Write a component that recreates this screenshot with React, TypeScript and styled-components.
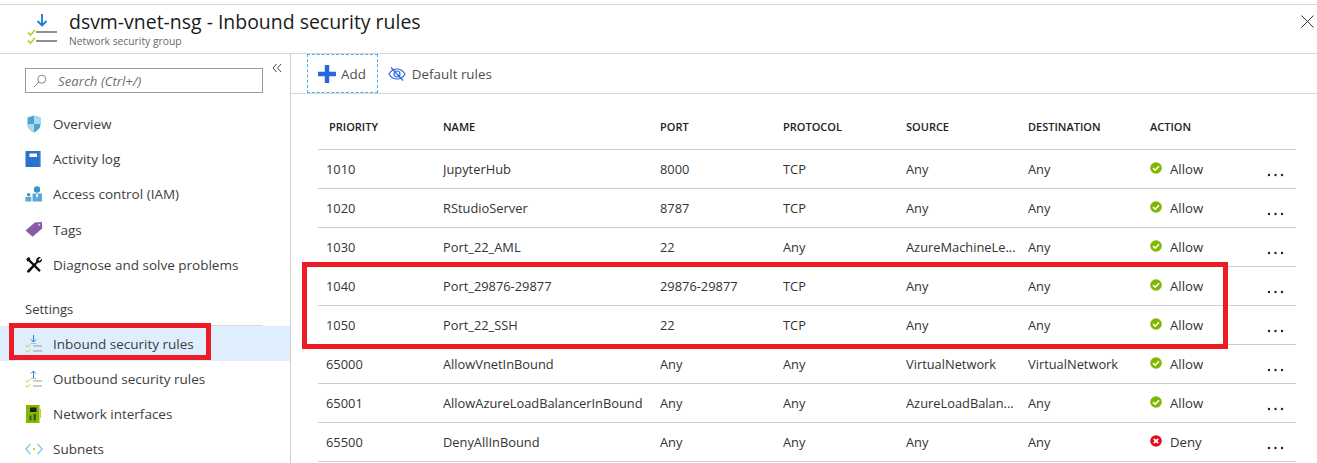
import React from "react";
import styled, { createGlobalStyle } from "styled-components";

const Global = createGlobalStyle`
  html, body { margin: 0; padding: 0; background: #fff; }
  body { font-family: "Open Sans", "Noto Sans", sans-serif; color: #333; overflow: hidden; }
  #root { width: 1317px; height: 463px; overflow: hidden; }
`;

const Page = styled.div`
  position: relative;
  width: 1317px;
  height: 463px;
  overflow: hidden;
  padding-top: 4px;
  box-sizing: border-box;
  display: flex;
  flex-direction: column;
  background: #fff;
`;

const Header = styled.header`
  flex: none;
  border-top: 1px solid #d6d6d6;
  border-bottom: 1px solid #d6d6d6;
  display: flex;
  align-items: flex-start;
  box-sizing: content-box;
  height: 48px;
  padding-left: 26px;
`;

const HeaderIcon = styled.svg`
  width: 34px;
  height: 34px;
  margin-top: 8px;
  flex: none;
`;

const Titles = styled.div`
  margin-left: 9px;
  display: flex;
  flex-direction: column;
`;

const Title = styled.h1`
  margin: 5px 0 0;
  font-size: 19.45px;
  line-height: 24px;
  font-weight: 400;
  color: #1b1b1b;
`;

const Subtitle = styled.div`
  font-size: 10.3px;
  line-height: 14px;
  color: #6b6b6b;
`;

const CloseBtn = styled.svg`
  width: 13px;
  height: 13px;
  margin-left: auto;
  margin-right: 3px;
  margin-top: 10px;
  flex: none;
`;

const Body = styled.div`
  flex: 1;
  display: flex;
  min-height: 0;
`;

const Side = styled.aside`
  width: 290px;
  flex: none;
  border-right: 1px solid #cfcfcf;
`;

const SearchRow = styled.div`
  display: flex;
  align-items: flex-start;
  padding: 14px 0 0 25px;
  height: 38px;
`;

const SearchBox = styled.div`
  width: 229px;
  height: 23px;
  border: 1px solid #9c9c9c;
  display: flex;
  align-items: center;
  padding-left: 7px;
  box-sizing: content-box;
`;

const SearchText = styled.span`
  font-size: 13.2px;
  font-style: italic;
  color: #6f6f6f;
  margin-left: 11px;
`;

const Collapse = styled.svg`
  width: 10px;
  height: 10px;
  margin: -5px 0 0 9px;
`;

const Nav = styled.nav`
  display: flex;
  flex-direction: column;
`;

const NavItem = styled.div<{ $active?: boolean; $nudge?: boolean }>`
  height: 35px;
  display: flex;
  align-items: center;
  padding-left: 25px;
  font-size: 13.5px;
  color: #3d3d3d;
  background: ${(p) => (p.$active ? "#deeefc" : "transparent")};
  margin-top: ${(p) => (p.$nudge ? "1px" : "0")};
`;

const NavIcon = styled.svg`
  width: 18px;
  height: 18px;
  flex: none;
  margin-right: 10px;
`;

const SectionLabel = styled.div`
  margin: 10px 0 0 25px;
  width: 238px;
  height: 34px;
  box-sizing: border-box;
  padding-top: 9px;
  font-size: 13px;
  line-height: 17px;
  color: #3a3a3a;
  border-bottom: 1px solid #d9d9d9;
`;

const Main = styled.main`
  flex: 1;
  min-width: 0;
  display: flex;
  flex-direction: column;
`;

const Toolbar = styled.div`
  height: 39px;
  flex: none;
  border-bottom: 1px solid #d6d6d6;
  display: flex;
  align-items: center;
  padding-left: 16px;
`;

const ToolBtn = styled.div<{ $focused?: boolean }>`
  display: flex;
  align-items: center;
  height: 39px;
  box-sizing: border-box;
  font-size: 13.4px;
  color: #4f4f4f;
  padding: ${(p) => (p.$focused ? "0 11px 0 10px" : "0 10px")};
  ${(p) => (p.$focused ? "border: 1px dashed #3fb4ea;" : "")}
`;

const ToolIcon = styled.svg<{ $gap: number }>`
  width: 18px;
  height: 18px;
  margin-right: ${(p) => p.$gap}px;
  flex: none;
`;

const Table = styled.div`
  margin-left: 27px;
  width: 978px;
  padding-top: 14px;
`;

const GRID = "117px 217px 123px 123px 122px 122px 1fr";

const HeadRow = styled.div`
  display: grid;
  grid-template-columns: ${GRID};
  height: 37px;
  padding-bottom: 4px;
  align-items: center;
  padding-left: 8px;
  border-bottom: 1px solid #cdcdcd;
  box-sizing: content-box;
  font-size: 11px;
  font-weight: 600;
  color: #222;
`;

const HeadCell = styled.div<{ $indent?: boolean }>`
  padding-left: ${(p) => (p.$indent ? "3px" : "0")};
`;

const Row = styled.div`
  display: grid;
  grid-template-columns: ${GRID};
  height: 38px;
  align-items: center;
  padding-left: 8px;
  border-bottom: 1px solid #cdcdcd;
  box-sizing: content-box;
  font-size: 12.85px;
  color: #333;
`;

const Cell = styled.div`
  white-space: nowrap;
  overflow: hidden;
  text-overflow: ellipsis;
`;

const ActionCell = styled.div`
  display: flex;
  align-items: center;
  position: relative;
  font-size: 13.2px;
`;

const StatusIcon = styled.svg`
  width: 12px;
  height: 12px;
  margin: -2px 8px 0 0;
  flex: none;
`;

const More = styled.svg`
  width: 17px;
  height: 4px;
  position: absolute;
  left: 117px;
  top: 13px;
`;

const Highlight = styled.div<{ $x: number; $y: number; $w: number; $h: number }>`
  position: absolute;
  left: ${(p) => p.$x}px;
  top: ${(p) => p.$y}px;
  width: ${(p) => p.$w}px;
  height: ${(p) => p.$h}px;
  box-sizing: border-box;
  border: 5px solid #ed1c24;
  pointer-events: none;
`;

const Overview = () => (
  <NavIcon viewBox="0 0 18 18">
    <path d="M9 .5 15.500 2.500V9.500C15.500 13.500 12 16 9 17.500 6 16 2.500 13.500 2.500 9.500V2.500Z" fill="#4aa5d3" />
    <path d="M9 .5V9H15.500V2.500Z" fill="#a9daec" />
    <path d="M9 9H2.500C2.600 13.400 6 16 9 17.500Z" fill="#a9daec" />
  </NavIcon>
);
const Log = () => (
  <NavIcon viewBox="0 0 18 18">
    <rect x="0.500" y="1" width="15.500" height="16" fill="#2a72cf" />
    <rect x="14.800" y="1" width="1.200" height="16" fill="#7fb0e6" />
    <rect x="4.500" y="3.500" width="7.500" height="3.500" fill="#fff" />
  </NavIcon>
);
const Iam = () => (
  <NavIcon viewBox="0 0 18 18">
    <circle cx="12" cy="4.500" r="3.200" fill="#3f94c6" />
    <path d="M7.500 8.500h9.500v8H7.500z" fill="#59a9d6" />
    <path d="M12 8.500l-1.200 2 1.200 2.500 1.200-2.500z" fill="#fff" />
    <circle cx="3.600" cy="9.800" r="1.800" fill="#3f94c6" />
    <path d="M0.300 12h6v4.500h-6z" fill="#59a9d6" />
  </NavIcon>
);
const Tag = () => (
  <NavIcon viewBox="0 0 18 18">
    <path d="M0.500 9.500 9.800 1.600 17 1 17.200 7.500 7.500 15.800Z" fill="#8a5aa8" />
    <circle cx="14.300" cy="3.800" r="1" fill="#e4d6ee" />
  </NavIcon>
);
const Tools = () => (
  <NavIcon viewBox="0 0 18 18">
    <path d="M1.200 3.200 3.400 1 5.400 2.400 5 3.600 15.800 14.300 14.200 16 3.400 5.200 2.400 5.600Z" fill="#111" />
    <path d="M15.800 1.200 13.200 3.800 14.400 5 17 2.600C17.400 5 15.600 7.200 13 6.800L4.400 16.300C3.400 17.400 1.300 15.600 2.300 14.400L11.200 5.400C10.700 2.800 13.200 .4 15.800 1.200Z" fill="#111" />
  </NavIcon>
);
const Rules = ({ up }: { up?: boolean }) => (
  <NavIcon viewBox="0 0 18 18">
    <path
      d={up ? "M8.500 8V1M6 3.500 8.500 1 11 3.500" : "M8.500 0V7M6 4.500 8.500 7 11 4.500"}
      fill="none"
      stroke="#2a7fdc"
      strokeWidth="1"
    />
    <path d="M6 8.500h5" stroke="#b9b9b9" strokeWidth="1" />
    <path d="M8 11h9M8 16h9" stroke="#9c9c9c" strokeWidth="1.100" />
    <path d="M0.500 10.500l2 1.700 2.800-3" fill="none" stroke="#b4d334" strokeWidth="1" />
    <path d="M0.500 15.500l2 1.700 2.800-3" fill="none" stroke="#b4d334" strokeWidth="1" />
  </NavIcon>
);
const Nic = () => (
  <NavIcon viewBox="0 0 18 18">
    <rect x="1" y="0" width="13.500" height="18" fill="#7fba00" />
    <rect x="14.500" y="4" width="1.500" height="9" fill="#d9c62e" />
    <rect x="5" y="2.500" width="6.500" height="4.500" fill="#1d1d1d" />
    <rect x="4.500" y="10.500" width="2" height="5" fill="#3d5a1e" />
    <rect x="8.500" y="9" width="2.500" height="6.500" fill="#3d5a1e" />
  </NavIcon>
);
const Subnet = () => (
  <NavIcon viewBox="0 0 18 18">
    <path d="M5.500 4 .8 9l4.700 5" fill="none" stroke="#7cbde6" strokeWidth="1.100" />
    <path d="M12.500 4 17.200 9l-4.700 5" fill="none" stroke="#7cbde6" strokeWidth="1.100" />
    <circle cx="9" cy="9" r="1.100" fill="#a6cc3c" />
  </NavIcon>
);

const Allow = () => (
  <StatusIcon viewBox="0 0 12 12">
    <circle cx="6" cy="6" r="5.800" fill="#7fb800" />
    <path d="M3 6.200 5.200 8.200 9 4.200" fill="none" stroke="#fff" strokeWidth="1.600" />
  </StatusIcon>
);
const Deny = () => (
  <StatusIcon viewBox="0 0 12 12">
    <circle cx="6" cy="6" r="5.800" fill="#e00b1c" />
    <path d="M3.800 3.800 8.200 8.200M8.200 3.800 3.800 8.200" fill="none" stroke="#fff" strokeWidth="1.700" />
  </StatusIcon>
);

const rows = [
  ["1010", "JupyterHub", "8000", "TCP", "Any", "Any", "Allow"],
  ["1020", "RStudioServer", "8787", "TCP", "Any", "Any", "Allow"],
  ["1030", "Port_22_AML", "22", "Any", "AzureMachineLe...", "Any", "Allow"],
  ["1040", "Port_29876-29877", "29876-29877", "TCP", "Any", "Any", "Allow"],
  ["1050", "Port_22_SSH", "22", "TCP", "Any", "Any", "Allow"],
  ["65000", "AllowVnetInBound", "Any", "Any", "VirtualNetwork", "VirtualNetwork", "Allow"],
  ["65001", "AllowAzureLoadBalancerInBound", "Any", "Any", "AzureLoadBalan...", "Any", "Allow"],
  ["65500", "DenyAllInBound", "Any", "Any", "Any", "Any", "Deny"],
];

const heads = ["PRIORITY", "NAME", "PORT", "PROTOCOL", "SOURCE", "DESTINATION", "ACTION"];

export default function App() {
  return (
    <Page>
      <Global />
      <Header>
        <HeaderIcon viewBox="0 0 34 34">
          <path d="M16 1V12.500M11.500 8 16 12.500 20.500 8" fill="none" stroke="#1e78d6" strokeWidth="1.800" />
          <path d="M10 19h21M10 28h21" stroke="#8f8f8f" strokeWidth="2.200" />
          <path d="M2 19.500l2.500 2.500 4.500-5" fill="none" stroke="#b4d334" strokeWidth="1.800" />
          <path d="M2 27.500l2.500 2.500 4.500-5" fill="none" stroke="#b4d334" strokeWidth="1.800" />
        </HeaderIcon>
        <Titles>
          <Title>dsvm-vnet-nsg - Inbound security rules</Title>
          <Subtitle>Network security group</Subtitle>
        </Titles>
        <CloseBtn viewBox="0 0 13 13">
          <path d="M0.500 0.500 12.500 12.500M12.500 0.500 0.500 12.500" stroke="#333" strokeWidth="1" />
        </CloseBtn>
      </Header>
      <Body>
        <Side>
          <SearchRow>
            <SearchBox>
              <svg width="14" height="14" viewBox="0 0 14 14">
                <circle cx="8.800" cy="5.200" r="4" fill="none" stroke="#8a8a8a" />
                <path d="M6 8 1 13" stroke="#8a8a8a" />
              </svg>
              <SearchText>Search (Ctrl+/)</SearchText>
            </SearchBox>
            <Collapse viewBox="0 0 10 10">
              <path d="M4.500 1 1 5l3.500 4M9 1 5.500 5 9 9" fill="none" stroke="#444" strokeWidth="1" />
            </Collapse>
          </SearchRow>
          <Nav>
            <NavItem><Overview />Overview</NavItem>
            <NavItem><Log />Activity log</NavItem>
            <NavItem><Iam />Access control (IAM)</NavItem>
            <NavItem $nudge><Tag />Tags</NavItem>
            <NavItem><Tools />Diagnose and solve problems</NavItem>
            <SectionLabel>Settings</SectionLabel>
            <NavItem $active><Rules />Inbound security rules</NavItem>
            <NavItem><Rules up />Outbound security rules</NavItem>
            <NavItem><Nic />Network interfaces</NavItem>
            <NavItem><Subnet />Subnets</NavItem>
          </Nav>
        </Side>
        <Main>
          <Toolbar>
            <ToolBtn $focused>
              <ToolIcon $gap={5} viewBox="0 0 18 18">
                <path d="M9 0v18M0 9h18" stroke="#2a66dc" strokeWidth="4.400" />
              </ToolIcon>
              Add
            </ToolBtn>
            <ToolBtn>
              <ToolIcon $gap={6} viewBox="0 0 18 18">
                <path d="M1 9c2-3.400 5-5 8-5s6 1.600 8 5c-2 3.400-5 5-8 5s-6-1.600-8-5Z" fill="none" stroke="#2a66dc" strokeWidth="1.200" />
                <circle cx="9" cy="9" r="3" fill="none" stroke="#2a66dc" strokeWidth="1.200" />
                <path d="M3 2.500l12 13" stroke="#2a66dc" strokeWidth="1.200" />
              </ToolIcon>
              Default rules
            </ToolBtn>
          </Toolbar>
          <Table>
            <HeadRow>
              {heads.map((h, i) => (
                <HeadCell key={h} $indent={i === 0}>{h}</HeadCell>
              ))}
            </HeadRow>
            {rows.map((r) => (
              <Row key={r[0]}>
                {r.slice(0, 6).map((c, i) => (
                  <Cell key={i}>{c}</Cell>
                ))}
                <ActionCell>
                  {r[6] === "Allow" ? <Allow /> : <Deny />}
                  {r[6]}
                  <More viewBox="0 0 17 4">
                    <circle cx="2" cy="2" r="1.200" fill="#222" />
                    <circle cx="8.500" cy="2" r="1.200" fill="#222" />
                    <circle cx="15" cy="2" r="1.200" fill="#222" />
                  </More>
                </ActionCell>
              </Row>
            ))}
          </Table>
        </Main>
      </Body>
      <Highlight $x={9} $y={323} $w={202} $h={37} />
      <Highlight $x={302} $y={262} $w={926} $h={87} />
    </Page>
  );
}
